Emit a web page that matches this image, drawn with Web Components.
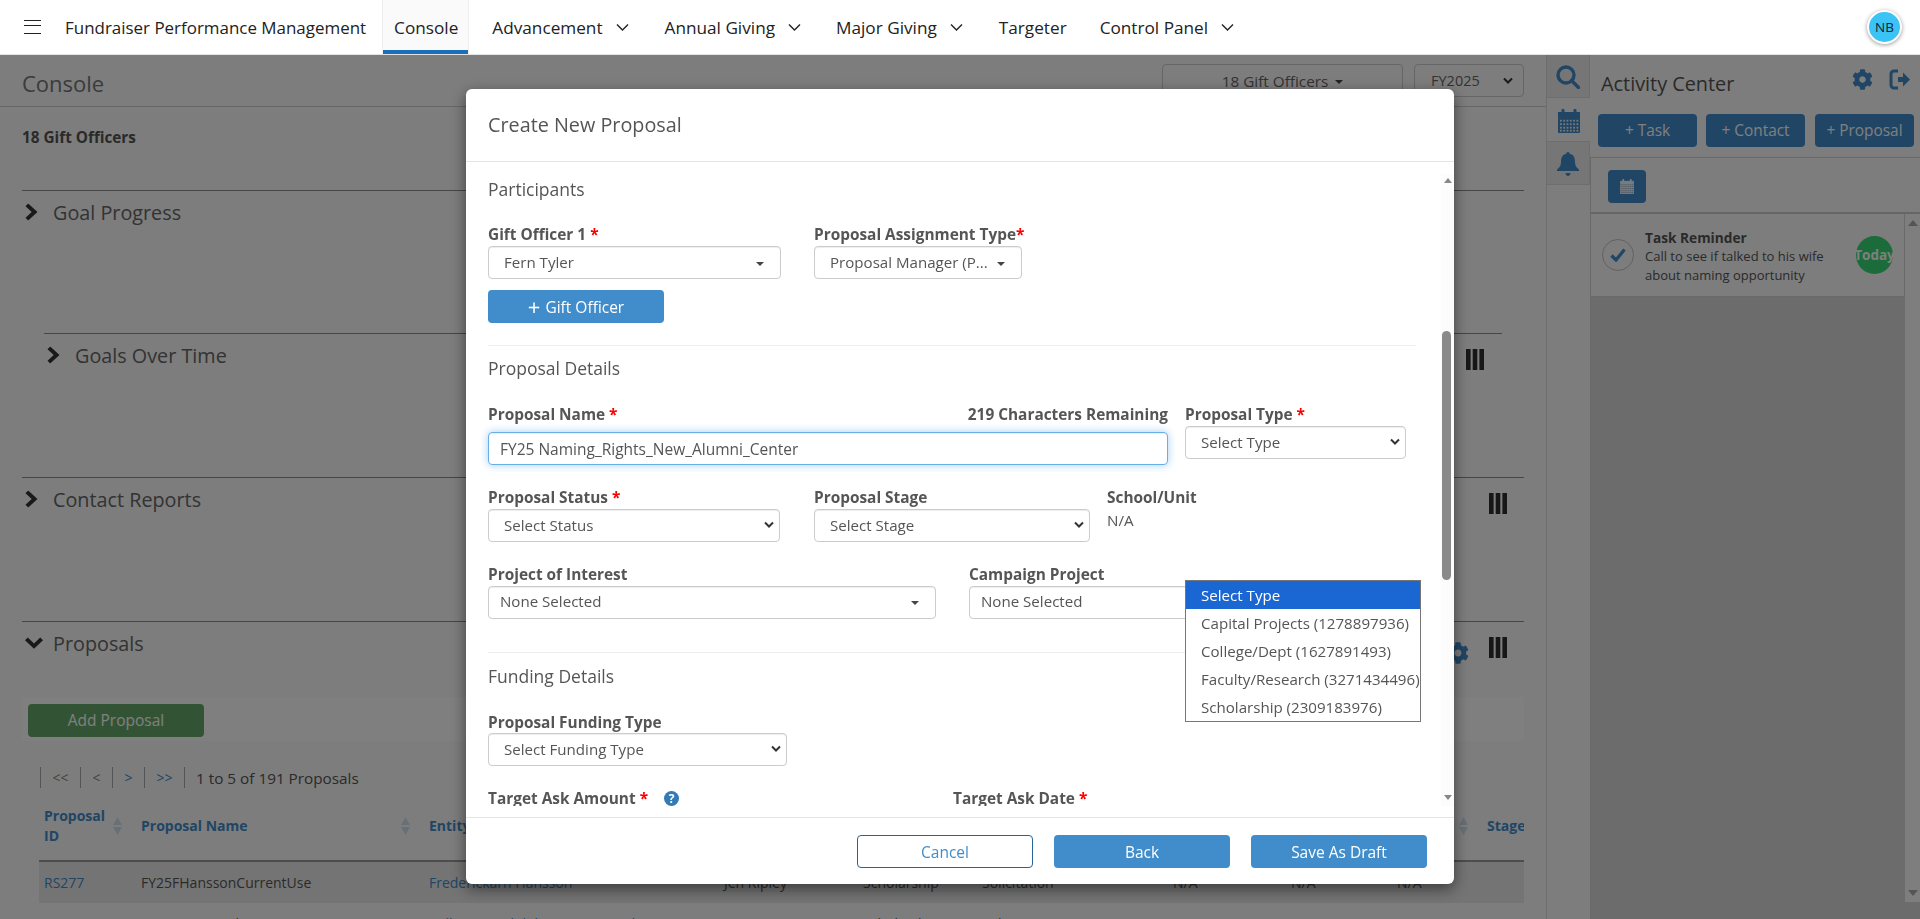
<!DOCTYPE html>
<html lang="en"><head><meta charset="utf-8"><title>Console</title>
<style>
html,body{margin:0;height:919px;overflow:hidden;background:#fafafa}
body{font-family:"Open Sans","Noto Sans",sans-serif;font-size:14px;color:#333}
</style></head><body>
<x-topnav></x-topnav>
<x-main></x-main>
<x-overlay></x-overlay>
<script>
const BL='#428bca';
const I={
 gear:'<svg viewBox="0 0 512 512" width="100%" height="100%" fill="currentColor"><path d="M487.4 315.7l-42.6-24.6c4.3-23.2 4.3-47 0-70.2l42.6-24.6c4.9-2.8 7.1-8.6 5.5-14-11.1-35.6-30-67.8-54.7-94.6-3.8-4.1-10-5.1-14.8-2.3L380.8 110c-17.9-15.4-38.5-27.3-60.8-35.1V25.8c0-5.6-3.9-10.5-9.4-11.7-36.7-8.2-74.3-7.8-109.2 0-5.5 1.2-9.4 6.1-9.4 11.7V75c-22.2 7.9-42.8 19.8-60.8 35.1L88.7 85.5c-4.9-2.8-11-1.9-14.8 2.3-24.7 26.7-43.6 58.9-54.7 94.6-1.7 5.4.6 11.2 5.5 14L67.3 221c-4.3 23.2-4.3 47 0 70.2l-42.6 24.6c-4.9 2.8-7.1 8.6-5.5 14 11.1 35.6 30 67.8 54.7 94.6 3.8 4.1 10 5.1 14.8 2.3l42.6-24.6c17.9 15.4 38.5 27.3 60.8 35.1v49.2c0 5.6 3.9 10.5 9.4 11.7 36.7 8.2 74.3 7.8 109.2 0 5.5-1.2 9.4-6.1 9.4-11.7v-49.2c22.2-7.9 42.8-19.8 60.8-35.1l42.6 24.6c4.9 2.8 11 1.9 14.8-2.3 24.7-26.7 43.6-58.9 54.7-94.6 1.5-5.5-.7-11.3-5.6-14.1zM256 336c-44.1 0-80-35.9-80-80s35.9-80 80-80 80 35.9 80 80-35.9 80-80 80z"/></svg>',
 cal:(c,g)=>`<svg viewBox="0 0 22 24" width="100%" height="100%"><rect x="0" y="3" width="22" height="6" fill="${c}"/><rect x="3.5" y="0" width="3" height="5" rx="1" fill="${c}"/><rect x="15.5" y="0" width="3" height="5" rx="1" fill="${c}"/><rect x="0" y="9" width="22" height="15" rx="1" fill="${c}"/>${[11,14.5,18,21].map(y=>[2,5.3,8.6,11.9,15.2,18.5].map(x=>`<rect x="${x}" y="${y-.2}" width="1.8" height="1.8" fill="${g}"/>`).join('')).join('')}</svg>`,
 nav:'<svg width="13" height="9" viewBox="0 0 13 9" fill="none" stroke="#222" stroke-width="1.4"><path d="M1 1.5l5.5 5.5L12 1.5"/></svg>',
 chev:'<svg width="10" height="8" viewBox="0 0 10 8" fill="none" stroke="#333" stroke-width="2"><path d="M1 1.5l4 4 4-4"/></svg>',
 bars:'<svg width="18" height="21" viewBox="0 0 18 21" fill="#2f2f2f"><rect x="0" width="4.6" height="21"/><rect x="6.7" width="4.6" height="21"/><rect x="13.4" width="4.6" height="21"/></svg>',
 right:'<svg width="13" height="17" viewBox="0 0 13 17" fill="#333"><path d="M3.2 0L12.5 8.500 3.2 17 .5 14.2 6.7 8.500.5 2.8z"/></svg>',
 down:'<svg width="18" height="12" viewBox="0 0 18 12" fill="#333"><path d="M0 3.2L2.8.5 9 6.400 15.2.5 18 3.2 9 11.7z"/></svg>',
 sort:'<svg width="9" height="18" viewBox="0 0 9 18" fill="#d0e0ee"><path d="M4.500 0L9 8H0zM4.500 18L0 10h9z"/></svg>'
};
function def(n,css,html){customElements.define(n,class extends HTMLElement{connectedCallback(){if(this.shadowRoot)return;const a=k=>this.getAttribute(k);this.attachShadow({mode:'open'}).innerHTML='<style>'+css+'</style>'+(typeof html==='function'?html(a):html)}})}

/* top navigation */
def('x-navitem',`:host{display:flex;align-items:center;height:54px;font-size:17.2px;color:#222;white-space:nowrap;box-sizing:border-box}
:host([active]){background:#fafafa;box-shadow:inset 1px 0 #eee,inset -1px 0 #eee,inset 0 -4px #1a6fb8;padding:0 11px 0 12px}
svg{display:block;margin-left:13px;margin-top:1px}`,a=>`<slot></slot>${a('menu')!==null?I.nav:''}`);
def('x-topnav',`:host{display:flex;align-items:center;height:54px;background:#fff;border-bottom:1px solid #e3e3e3;padding-left:24px}
.h{width:17px;height:12px;border-top:1.6px solid #222;border-bottom:1.6px solid #222;position:relative;margin-right:24px}
.h:after{content:"";position:absolute;left:0;right:0;top:4.4px;border-top:1.6px solid #222}
.b{margin-right:16px}.a{margin-left:auto;margin-right:18px;width:31px;height:30px;border-radius:50%;background:#3bc3f5;border:2px solid #fff;box-shadow:0 1px 4px rgba(0,0,0,.4);display:flex;align-items:center;justify-content:center;font-size:13.5px;color:#123}`,
`<div class="h"></div><x-navitem class="b" style="font-size:16.95px">Fundraiser Performance Management</x-navitem>
<x-navitem active style="margin-right:23px">Console</x-navitem>
<x-navitem menu style="margin-right:36px">Advancement</x-navitem>
<x-navitem menu style="margin-right:35px">Annual Giving</x-navitem>
<x-navitem menu style="margin-right:36px">Major Giving</x-navitem>
<x-navitem style="margin-right:33px">Targeter</x-navitem>
<x-navitem menu>Control Panel</x-navitem><div class="a">NB</div>`);

/* console sections */
def('x-section',`:host{display:block;border-top:1px solid #8c8c8c;box-sizing:border-box}
.t{display:flex;align-items:center;height:42px;margin-bottom:2px;font-size:19.8px;color:#666;position:relative;padding-left:31px}
.c{position:absolute;left:0;top:50%;transform:translateY(-50%);display:flex;margin-left:3px}
.i{margin-left:auto;display:flex;align-items:center;gap:20px;position:relative;top:4px}
.g{width:22px;height:22px;color:${BL};display:block;position:relative;top:6px}`,
a=>`<div class="t"><span class="c">${a('open')!==null?I.down:I.right}</span>${a('title')}<span class="i" style="margin-right:${a('ir')||'0'}px">${a('gear')!==null?`<span class="g">${I.gear}</span>`:''}${a('bars')!==null?I.bars:''}</span></div><slot></slot>`);

def('x-proposals-table',`:host{display:block;margin:0 0 0 17px;font-size:14px}
.r{display:grid;grid-template-columns:97px 288px 295px 139px 119px 191px 118px 106px 90px 42px;overflow:hidden;white-space:nowrap}
.r>*{padding:0 5px;overflow:hidden;box-sizing:border-box}
.h{align-items:center;border-bottom:2px solid #9a9a9a;color:${BL};font-weight:700;height:60px}
.h>*{display:flex;align-items:center;justify-content:space-between;line-height:20px;white-space:normal;margin-bottom:8px}
.h svg{flex:none;margin-right:9px}
.d{height:41px;line-height:41px;color:#555}
.z{background:#e9e9e9}a{color:${BL};text-decoration:none}`,
`<div class="r h"><div>Proposal ID${I.sort}</div><div>Proposal Name${I.sort}</div><div>Entity</div><div></div><div></div><div></div><div></div><div></div><div><span></span>${I.sort}</div><div style="white-space:nowrap">Stage</div></div>
<div class="r d z"><div><a>RS277</a></div><div>FY25FHanssonCurrentUse</div><div><a>Frederickarn Hansson</a></div><div>Jen Ripley</div><div>Scholarship</div><div>Solicitation</div><div>N/A</div><div>N/A</div><div>N/A</div><div></div></div>
<div class="r d"><div><a>RS276</a></div><div>FY25 Hearst Edge 2025</div><div><a>William Randolph Hearst Foundation</a></div><div>Jason Spencer</div><div>Scholarship</div><div>Solicitation</div><div>N/A</div><div>N/A</div><div>N/A</div><div></div></div>`);

def('x-pager',`:host{display:flex;align-items:center;height:21px;margin:26px 0 0 18px;font-size:15.3px;color:#555}
b{display:block;width:32px;height:21px;border-left:1px solid #a8a8a8;box-sizing:border-box;text-align:center;font-weight:400;line-height:21px;color:#888;font-size:14px}
b.w{width:40px}b.on{color:${BL}}b.l{width:12px}`,
`<b class="w">&lt;&lt;</b><b>&lt;</b><b class="on">&gt;</b><b class="w on">&gt;&gt;</b><b class="l"></b><span>1 to 5 of 191 Proposals</span>`);

def('x-console',`:host{display:block;width:1546px;box-sizing:border-box;padding:0 22px;height:864px;overflow:hidden;flex:none}
.top{display:flex;align-items:center;height:51px;margin:0 -22px;padding:0 22px;border-bottom:1px solid #ccc}
h1{font-weight:400;font-size:22px;color:#777;margin:5px 0 0}
.dd{margin-left:auto;width:241px;height:33px;border:1px solid #ccc;border-radius:4px;box-sizing:border-box;display:flex;align-items:center;justify-content:center;font-size:15.3px;color:#666;gap:7px}
.dd i{border:4px solid transparent;border-top-color:#444;border-bottom:0;margin-top:2px}
.fy{margin-left:11px;width:110px;height:33px;border:1px solid #ccc;border-radius:4px;box-sizing:border-box;display:flex;align-items:center;padding:0 10px 0 16px;justify-content:space-between;font-size:14.5px;color:#666}
.sum{height:83px;font-weight:700;font-size:15.3px;color:#555;padding-top:20px;box-sizing:border-box;line-height:20px}
.nest{margin:100px 22px 0;display:block;height:145px}
.strip{background:#fff;height:44px;margin-top:33px;padding:7px 6px;box-sizing:border-box}
.add{width:176px;height:33px;border-radius:4px;background:#66a868;color:#fff;text-align:center;line-height:33px;font-size:15.5px}`,
`<div class="top"><h1>Console</h1><div class="dd">18 Gift Officers<i></i></div><div class="fy">FY2025${I.chev}</div></div>
<div class="sum">18 Gift Officers</div>
<x-section title="Goal Progress" style="height:287px">
 <x-section class="nest" title="Goals Over Time" bars ir="18"></x-section>
</x-section>
<x-section title="Contact Reports" bars ir="17" style="height:144px"></x-section>
<x-section open title="Proposals" gear bars ir="17">
 <div class="strip"><div class="add">Add Proposal</div></div>
 <x-pager></x-pager>
 <x-proposals-table style="margin-top:12px"></x-proposals-table>
</x-section>`);

/* rail + activity center */
def('x-rail',`:host{display:block;width:44px;flex:none;border-left:1px solid #ddd;box-sizing:border-box;height:864px}
div{height:43px;box-sizing:border-box;display:flex;align-items:center;justify-content:center;background:#ececec;border-bottom:1px solid #ddd;border-right:1px solid #ddd;padding-top:2px}
div.on{background:transparent;border-right:0;border-bottom:0}
svg{display:block}`,
`<div><svg width="24" height="24" viewBox="0 0 24 24" fill="none" stroke="${BL}" stroke-width="3.4"><circle cx="10" cy="10" r="8"/><path d="M15.500 15.500l7 7" stroke-linecap="round"/></svg></div>
<div class="on"><span style="width:22px;height:24px;display:block">${I.cal(BL,'#eef3f7')}</span></div>
<div style="height:44px;border-top:1px solid #ddd"><svg width="22" height="24" viewBox="0 0 22 24" fill="${BL}"><path d="M11 0c1 0 1.700.7 1.700 1.800 4 .8 5.300 4 5.300 8 0 4 1.500 6 4 7.700V19H0v-1.500c2.500-1.700 4-3.700 4-7.700 0-4 1.300-7.200 5.300-8C9.300.7 10 0 11 0z"/><path d="M8.500 21h5c0 1.500-1 3-2.500 3s-2.500-1.500-2.500-3z"/></svg></div>`);

def('x-task-card',`:host{display:flex;align-items:center;height:83px;border:1px solid #d4d4d4;border-width:0 1px 1px 0;box-sizing:border-box;background:#fafafa;font-size:13px;color:#555;line-height:19px;padding-left:11px}
.k{flex:none;width:32px;height:32px;border:1px solid #c4c4c4;border-radius:50%;box-sizing:border-box;display:flex;align-items:center;justify-content:center;margin-right:11px}
.x{flex:1;padding-top:2px}.x b{display:block;font-size:13.7px}
.t{flex:none;width:37px;height:38px;border-radius:50%;background:#38d674;color:#fff;font-weight:700;font-size:13.5px;display:flex;align-items:center;justify-content:center;margin-right:11px;white-space:nowrap}`,
`<div class="k"><svg width="16" height="14" viewBox="0 0 16 14" fill="none" stroke="${BL}" stroke-width="3.2"><path d="M1.500 7.500l4.500 4.500L14.500 1.500"/></svg></div>
<div class="x"><b>Task Reminder</b>Call to see if talked to his wife<br>about naming opportunity</div><div class="t">Today</div>`);

def('x-activity',`:host{display:flex;flex-direction:column;width:330px;flex:none;height:864px}
.h{display:flex;align-items:center;height:59px;padding:0 9px 0 11px}
.h h2{font-weight:400;font-size:19.85px;margin:0;color:#555;position:relative;top:-1px}
.h .i{width:21px;height:21px;color:${BL};margin-left:auto;position:relative;top:-5px;display:block}
.h svg.e{margin-left:16px;position:relative;top:-5px}
.bt{display:flex;padding-left:8px;gap:9px;height:44px;border-bottom:1px solid #d4d4d4;box-sizing:border-box}
.bt b{display:block;width:99px;height:33px;border-radius:4px;background:${BL};color:#fff;font-weight:400;font-size:15.4px;line-height:33px;text-align:center}
.bt b:last-child{margin-left:1px}
.wrap{flex:1;display:flex;flex-direction:column;border-left:1px solid #d4d4d4}
.cal{height:56px;padding:12px 0 0 17px;box-sizing:border-box;border-bottom:2px solid #ccc}
.cal span{display:block;width:38px;height:33px;border-radius:4px;background:${BL};padding:9px 11px;box-sizing:border-box}
.lst{flex:1;display:flex;background:#d8d8d8}
.l{flex:1;min-width:0}.sb{flex:none;width:15px;height:688px;background:#fdfdfd;display:flex;flex-direction:column;justify-content:space-between;align-items:center;padding:6px 0;box-sizing:border-box}
.u{border:5px solid transparent;border-bottom:6px solid #aaa;border-top:0}.dn{border:5px solid transparent;border-top:6px solid #aaa;border-bottom:0}`,
`<div class="h"><h2>Activity Center</h2><span class="i">${I.gear}</span><svg class="e" width="22" height="21" viewBox="0 0 22 21" fill="none" stroke="${BL}" stroke-width="3"><path d="M9 2H5a3 3 0 0 0-3 3v11a3 3 0 0 0 3 3h4"/><path d="M9 8h5V3.500l7 7-7 7V13H9z" fill="${BL}" stroke="none"/></svg></div>
<div class="bt"><b>+ Task</b><b>+ Contact</b><b>+ Proposal</b></div>
<div class="wrap"><div class="cal"><span>${I.cal('#f3f6f9','#8aa5bd')}</span></div>
<div class="lst"><div class="l"><x-task-card></x-task-card></div><div class="sb"><i class="u"></i><i class="dn"></i></div></div></div>`);

def('x-main',`:host{display:flex;height:864px;overflow:hidden}`,`<x-console></x-console><x-rail></x-rail><x-activity></x-activity>`);

/* form controls */
def('x-field',`:host{display:block;flex:none}
.l{display:flex;justify-content:space-between;height:20px;line-height:20px;font-weight:700;font-size:15.4px;color:#555;white-space:nowrap}
.l i{font-style:normal;color:#f00}
.c{margin-top:var(--gap,1px)}`,
a=>`<div class="l"><span>${a('label')}${a('req')==='tight'?'<i>*</i>':a('req')!==null?' <i>*</i>':''}<slot name="extra"></slot></span><span>${a('right')||''}</span></div><div class="c"><slot></slot></div>`);
def('x-select',`:host{display:flex;align-items:center;height:33px;border:1px solid #ccc;border-radius:4px;box-sizing:border-box;padding:0 0 1px 15px;font-size:15.1px;color:#555;background:#fff;box-shadow:inset 0 1px 1px rgba(0,0,0,.075);white-space:nowrap;justify-content:space-between}
:host([tight]){padding:0 0 3px 11px}
.car{flex:none;border:4px solid transparent;border-top-color:#444;border-bottom:0;margin:3px 16px 0 0}
svg{flex:none;margin-right:5px}`,a=>`<slot></slot>${a('caret')!==null?'<i class="car"></i>':I.chev}`);
def('x-btn',`:host{display:flex;align-items:center;justify-content:center;width:176px;height:33px;border-radius:4px;box-sizing:border-box;font-size:15.5px;background:#418ccb;color:#fff}
:host([outline]){background:#fff;border:1px solid #2a6496;color:#418ccb}`,`<slot></slot>`);
def('x-type-popup',`:host{position:absolute;left:719px;top:491px;width:236px;height:142px;box-sizing:border-box;border:1px solid #767676;background:#fff;font-size:15.1px;color:#555;z-index:3;white-space:nowrap;overflow:hidden}
div{height:28px;line-height:29px;padding-left:15px}div.s{background:#1a67d3;color:#fff}`,
`<div class="s">Select Type</div><div>Capital Projects (1278897936)</div><div>College/Dept (1627891493)</div><div>Faculty/Research (3271434496)</div><div>Scholarship (2309183976)</div>`);

def('x-modal',`:host{display:block;width:988px;height:795px;background:#fff;border-radius:6px;box-shadow:0 5px 15px rgba(0,0,0,.5);position:relative;color:#555}
.hd{height:70px;padding-bottom:2px;border-bottom:1px solid #e5e5e5;display:flex;align-items:center;padding-left:22px;font-size:19.8px;color:#555}
.bd{display:flex;height:632px;margin-top:12px;overflow:hidden}
.sc{flex:1;padding:0 25px 0 22px;min-width:0;overflow:hidden}
h3{font-weight:400;font-size:17.5px;height:32px;line-height:31px;margin:0;color:#555}
hr{border:0;border-top:1px solid #eee;margin:0}
.r{display:flex}
.in{height:33px;border:1px solid #66afe9;border-radius:4px;box-sizing:border-box;display:flex;align-items:center;padding-left:11px;font-size:15.5px;color:#555;box-shadow:inset 0 1px 1px rgba(0,0,0,.075),0 0 8px rgba(102,175,233,.6)}
.q{display:inline-flex;align-items:center;justify-content:center;width:15px;height:15px;border-radius:50%;background:#337ab7;color:#fff;font-size:12px;font-weight:700;margin-left:16px;line-height:15px;vertical-align:1px}
.na{font-size:15.2px;line-height:22px;color:#555}
.sb{flex:none;width:13px;background:#fcfcfc;display:flex;flex-direction:column;align-items:center;justify-content:space-between;padding:4px 0 6px;box-sizing:border-box;position:relative}
.th{position:absolute;left:1px;top:157px;width:9px;height:249px;border-radius:5px;background:#8a8a8a}
.u{border:4px solid transparent;border-bottom:5px solid #888;border-top:0}.dn{border:4px solid transparent;border-top:5px solid #888;border-bottom:0}
.ft{position:absolute;left:0;right:0;top:728px;border-top:1px solid #e5e5e5;height:66px;display:flex;justify-content:flex-end;padding:17px 27px 0 0;box-sizing:border-box;gap:21px}`,
`<div class="hd">Create New Proposal</div>
<div class="bd"><div class="sc">
<h3>Participants</h3>
<div class="r" style="margin-top:19px;gap:33px"><x-field label="Gift Officer 1" req style="width:293px"><x-select caret>Fern Tyler</x-select></x-field><x-field label="Proposal Assignment Type" req="tight" style="width:208px"><x-select caret>Proposal Manager (P...</x-select></x-field></div>
<x-btn style="margin-top:11px"><span style="font-size:22px;line-height:14px;margin-right:5px;position:relative;top:-1px">+</span>Gift Officer</x-btn>
<hr style="margin-top:22px">
<h3 style="margin-top:7px">Proposal Details</h3>
<div class="r" style="margin-top:20px;gap:17px"><x-field label="Proposal Name" req right="219 Characters Remaining" style="width:680px;--gap:7px"><div class="in">FY25 Naming_Rights_New_Alumni_Center</div></x-field><x-field label="Proposal Type" req style="width:221px"><x-select>Select Type</x-select></x-field></div>
<div class="r" style="margin-top:23px"><x-field label="Proposal Status" req style="width:292px;margin-right:34px"><x-select>Select Status</x-select></x-field><x-field label="Proposal Stage" style="width:276px;margin-right:17px"><x-select>Select Stage</x-select></x-field><x-field label="School/Unit"><div class="na">N/A</div></x-field></div>
<div class="r" style="margin-top:23px;gap:33px"><x-field label="Project of Interest" style="width:448px"><x-select caret tight>None Selected</x-select></x-field><x-field label="Campaign Project" style="width:447px"><x-select caret tight>None Selected</x-select></x-field></div>
<hr style="margin-top:33px">
<h3 style="margin-top:8px">Funding Details</h3>
<x-field label="Proposal Funding Type" style="width:299px;margin-top:20px;--gap:0px"><x-select>Select Funding Type</x-select></x-field>
<div class="r" style="margin-top:23px"><x-field label="Target Ask Amount" req style="width:465px"><span slot="extra" class="q">?</span></x-field><x-field label="Target Ask Date" req></x-field></div>
</div><div class="sb"><i class="u"></i><div class="th"></div><i class="dn"></i></div></div>
<div class="ft"><x-btn outline>Cancel</x-btn><x-btn>Back</x-btn><x-btn>Save As Draft</x-btn></div>
<x-type-popup></x-type-popup>`);

def('x-overlay',`:host{position:fixed;left:0;top:55px;right:0;bottom:0;background:rgba(0,0,0,.5);display:flex;justify-content:center;padding-top:34px;box-sizing:border-box;z-index:10}
x-modal{flex:none}`,`<x-modal></x-modal>`);
</script>
</body></html>
